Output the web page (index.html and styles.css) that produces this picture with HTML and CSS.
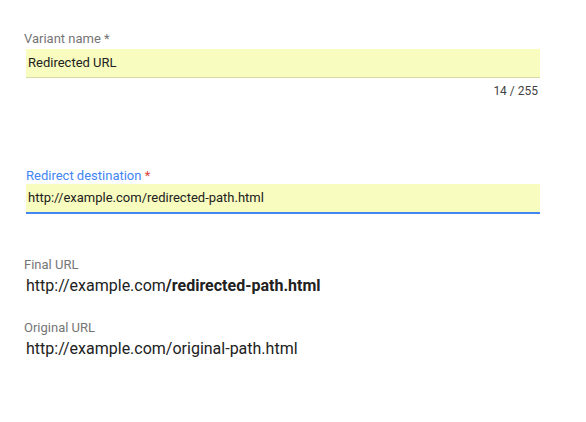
FILE: index.html
```html
<!DOCTYPE html>
<html>
<head>
<meta charset="utf-8">
<link rel="stylesheet" href="styles.css">
</head>
<body>
<div class="form">
  <div class="field">
    <div class="label">Variant name *</div>
    <div class="input">Redirected URL</div>
    <div class="counter">14 / 255</div>
  </div>
  <div class="field field-focused">
    <div class="label label-focused">Redirect destination <span class="req">*</span></div>
    <div class="input input-focused">http://example.com/redirected-path.html</div>
  </div>
  <div class="info">
    <div class="label">Final URL</div>
    <div class="url">http://example.com<b>/redirected-path.html</b></div>
  </div>
  <div class="info">
    <div class="label">Original URL</div>
    <div class="url">http://example.com/original-path.html</div>
  </div>
</div>
</body>
</html>
```
FILE: styles.css
```css
html, body {
  margin: 0;
  background: #fff;
  font-family: Roboto, "Noto Sans", sans-serif;
}
.form {
  width: 516px;
  padding: 31px 0 0 24px;
}
.label {
  font-size: 13px;
  line-height: 16px;
  color: #757575;
}
.label-focused {
  color: #4285f4;
  padding-left: 2px;
}
.req {
  color: #db4437;
}
.input {
  margin-left: 2px;
  margin-top: 2px;
  height: 28px;
  line-height: 28px;
  padding-left: 2px;
  font-size: 13px;
  color: #212121;
  background: #f8fcbe;
  border-bottom: 1px solid #d8dba8;
}
.input-focused {
  margin-top: 0;
  border-bottom: 2px solid #4285f4;
}
.counter {
  text-align: right;
  font-size: 12px;
  line-height: 16px;
  color: #424242;
  padding-right: 2px;
  margin-top: 5px;
}
.field-focused {
  margin-top: 69px;
}
.field-focused + .info {
  margin-top: 43px;
}
.info + .info {
  margin-top: 23px;
}
.url {
  font-size: 16px;
  line-height: 22px;
  color: #212121;
  padding-left: 2px;
  margin-top: 2px;
}
.url b {
  font-weight: 700;
}
```
